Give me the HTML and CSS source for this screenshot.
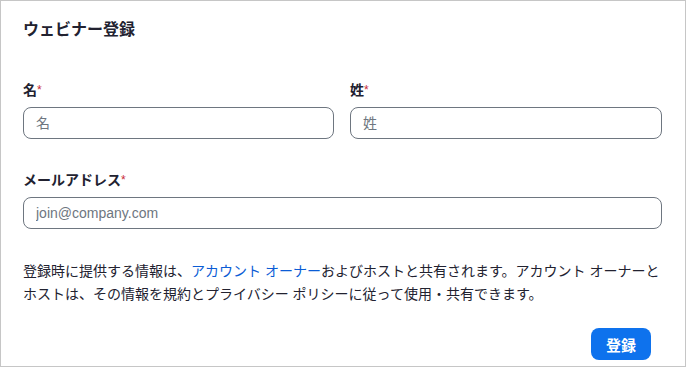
FILE: index.html
```html
<!DOCTYPE html>
<html lang="ja">

<head>
    <meta charset="UTF-8">
    <meta name="viewport" content="width=device-width, initial-scale=1.0">
    <title>ウェビナー登録</title>
    <link rel="stylesheet" href="styles.css">
</head>

<body>
    <div class="register-card">
        <h2 class="register-title">ウェビナー登録</h2>

        <div class="name-row">
            <div class="field">
                <label class="field-label" for="firstName">名<span class="req">*</span></label>
                <input class="field-input" id="firstName" type="text" placeholder="名">
            </div>
            <div class="field">
                <label class="field-label" for="lastName">姓<span class="req">*</span></label>
                <input class="field-input" id="lastName" type="text" placeholder="姓">
            </div>
        </div>

        <div class="field email-field">
            <label class="field-label" for="email">メールアドレス<span class="req">*</span></label>
            <input class="field-input" id="email" type="email" placeholder="join@company.com">
        </div>

        <p class="notice">登録時に提供する情報は、<a href="#">アカウント オーナー</a>およびホストと共有されます。アカウント オーナーとホストは、その情報を規約とプライバシー ポリシーに従って使用・共有できます。</p>

        <div class="actions">
            <button class="submit-btn" type="button">登録</button>
        </div>
    </div>
</body>

</html>
```

FILE: styles.css
```css
* {
    margin: 0;
    padding: 0;
    box-sizing: border-box;
}

body {
    font-family: "Liberation Sans", "Noto Sans CJK JP", sans-serif;
    color: #222230;
    background: #fff;
}

.register-card {
    width: 686px;
    height: 367px;
    border: 1px solid #c6c6c6;
    padding: 17px 23px 0 22px;
    overflow: hidden;
}

.register-title {
    font-size: 16px;
    line-height: 24px;
    font-weight: 700;
}

.name-row {
    display: grid;
    grid-template-columns: 311px 1fr;
    gap: 16px;
    margin-top: 38px;
}

.field {
    display: flex;
    flex-direction: column;
    gap: 7px;
}

.email-field {
    margin-top: 31px;
}

.field-label {
    font-size: 14px;
    line-height: 20px;
    font-weight: 700;
}

.req {
    color: #c92a36;
    font-size: 12px;
    font-weight: 400;
    vertical-align: top;
}

.field-input {
    height: 32px;
    border: 1px solid #6e7680;
    border-radius: 8px;
    padding: 0 12px;
    font-family: inherit;
    font-size: 14px;
    color: #222230;
    outline: none;
}

.field-input::placeholder {
    color: #6e7680;
}

.notice {
    margin-top: 31px;
    font-size: 14px;
    line-height: 23px;
}

.notice a {
    color: #0b5cd5;
    text-decoration: none;
}

.actions {
    display: flex;
    justify-content: flex-end;
    margin-top: 22px;
    padding-right: 11px;
}

.submit-btn {
    width: 60px;
    height: 32px;
    border: none;
    border-radius: 8px;
    background: #0e72ed;
    color: #fff;
    font-family: inherit;
    font-size: 15px;
    font-weight: 700;
}
```
